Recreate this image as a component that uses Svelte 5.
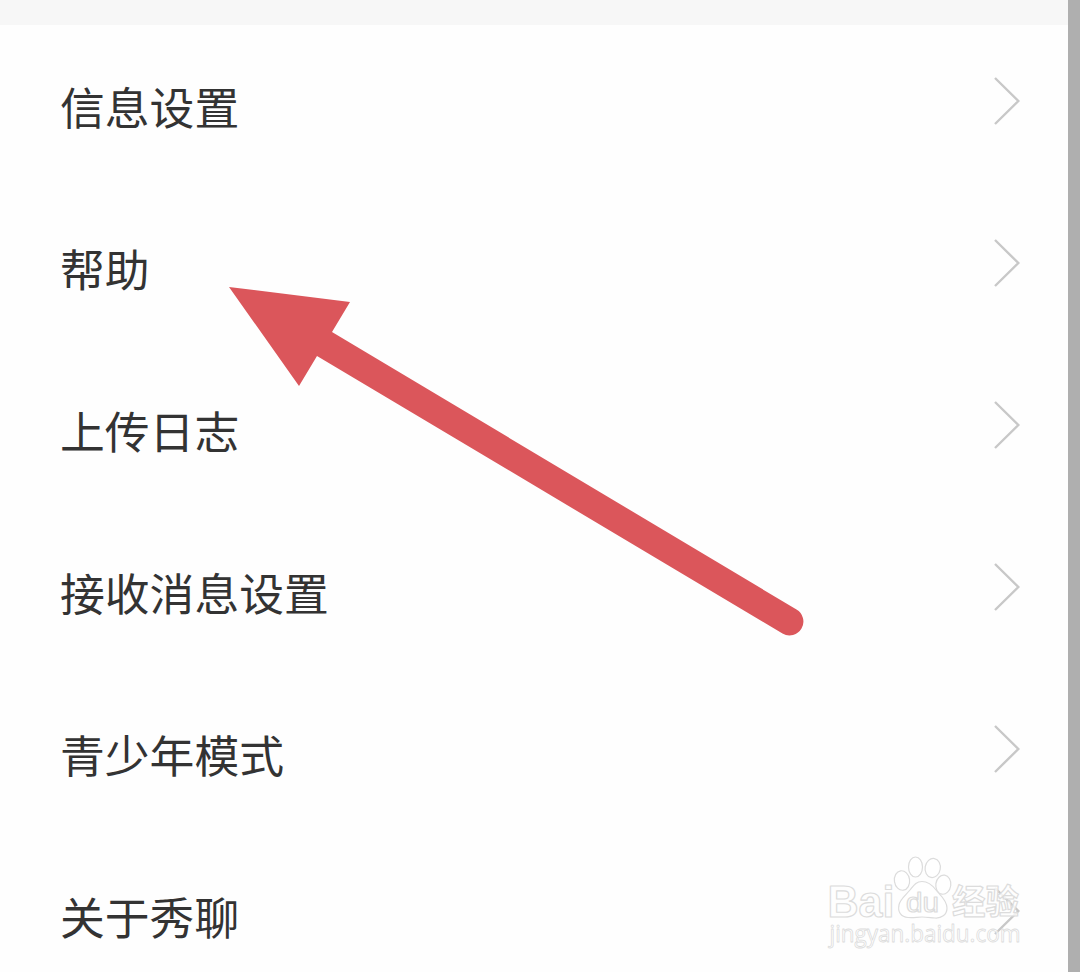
<script>
  const items = [
    "信息设置",
    "帮助",
    "上传日志",
    "接收消息设置",
    "青少年模式",
    "关于秀聊",
  ];
</script>

<main class="screen">
  <div class="content">
    <div class="divider"></div>
    <ul class="settings">
      {#each items as item}
        <li class="row">
          <span class="label">{item}</span>
          <svg class="chevron" viewBox="0 0 28 50" width="28" height="50">
            <path d="M2 2 L25.3 25 L2 48" />
          </svg>
        </li>
      {/each}
    </ul>
  </div>
  <div class="edge"></div>

  <svg class="arrow" viewBox="0 0 1080 972" width="1080" height="972">
    <path
      d="M229 287 L350 302 L332 332 L796.5 609.5 A13.7 13.7 0 0 1 782.5 633.5 L317 356 L299 386 Z"
    />
  </svg>

  <svg class="watermark" viewBox="0 0 210 104" width="210" height="104">
    <text class="brand" x="7.5" y="67" textLength="67" lengthAdjust="spacingAndGlyphs">Bai</text>
    <ellipse cx="82" cy="30.5" rx="7.6" ry="9.8" transform="rotate(-8 82 30.5)" />
    <ellipse cx="95.5" cy="17" rx="7" ry="10" />
    <ellipse cx="112.7" cy="18" rx="7.6" ry="9.6" transform="rotate(10 112.7 18)" />
    <ellipse cx="123.3" cy="34.7" rx="7.5" ry="9.6" transform="rotate(8 123.3 34.7)" />
    <path
      d="M102 31.5 C109 31.5 113 36 116 40 C120 45 127 50 127 58 C127 65 121 68.5 115 68 C110 67.6 107 67 102 67 C97 67 94 68 88 67.5 C81 67 77.5 62 79 55 C80 49 86 45 90 40 C94 35 96 31.5 102 31.5 Z"
    />
    <text class="du" x="86" y="62" textLength="33" lengthAdjust="spacingAndGlyphs">du</text>
    <text class="cjk" x="132" y="64" textLength="67" lengthAdjust="spacingAndGlyphs">经验</text>
    <text class="url" x="9.5" y="92" textLength="191" lengthAdjust="spacingAndGlyphs">jingyan.baidu.com</text>
  </svg>
</main>

<style>
  :global(body) {
    margin: 0;
    overflow: hidden;
  }

  .screen {
    position: relative;
    display: flex;
    width: 1080px;
    height: 972px;
    overflow: hidden;
    background-color: #fefefe;
    font-family: "Noto Sans CJK SC", sans-serif;
  }

  .content {
    flex: 1;
  }

  .divider {
    height: 25px;
    background-color: #f7f7f7;
  }

  .edge {
    width: 12px;
    background-color: #afafaf;
  }

  .settings {
    margin: 0;
    padding: 0;
    list-style: none;
  }

  .row {
    display: flex;
    align-items: center;
    justify-content: space-between;
    box-sizing: border-box;
    height: 162px;
    padding: 0 47px 10px 60px;
  }

  .label {
    padding-top: 10px;
    color: #333;
    font-size: 44.8px;
    line-height: 60px;
  }

  .chevron {
    fill: none;
    stroke: #c8c8c8;
    stroke-width: 2.4;
  }

  .arrow {
    position: absolute;
    top: 0;
    left: 0;
    fill: #db565b;
  }

  .watermark {
    position: absolute;
    top: 850px;
    left: 820px;
    fill: rgba(255, 255, 255, 0.8);
    stroke: #dcdcdc;
    stroke-width: 1.2;
    stroke-linejoin: round;
  }

  .brand {
    font-family: "Liberation Sans", sans-serif;
    font-size: 45px;
    font-weight: 700;
  }

  .du {
    font-family: "Liberation Sans", sans-serif;
    font-size: 27px;
    font-weight: 400;
  }

  .cjk {
    font-size: 34px;
    font-weight: 700;
  }

  .url {
    font-family: "Open Sans", sans-serif;
    font-size: 24px;
    stroke-width: 0.8;
  }
</style>
